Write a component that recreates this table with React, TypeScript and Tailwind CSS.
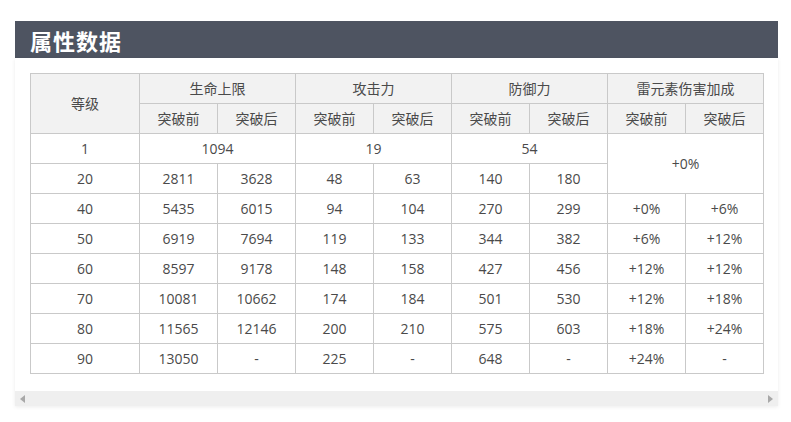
import React from "react";

type Cell = { v: string; span?: number; rows?: number };

const rows: Cell[][] = [
  [{ v: "1" }, { v: "1094", span: 2 }, { v: "19", span: 2 }, { v: "54", span: 2 }, { v: "+0%", span: 2, rows: 2 }],
  [{ v: "20" }, { v: "2811" }, { v: "3628" }, { v: "48" }, { v: "63" }, { v: "140" }, { v: "180" }],
  [{ v: "40" }, { v: "5435" }, { v: "6015" }, { v: "94" }, { v: "104" }, { v: "270" }, { v: "299" }, { v: "+0%" }, { v: "+6%" }],
  [{ v: "50" }, { v: "6919" }, { v: "7694" }, { v: "119" }, { v: "133" }, { v: "344" }, { v: "382" }, { v: "+6%" }, { v: "+12%" }],
  [{ v: "60" }, { v: "8597" }, { v: "9178" }, { v: "148" }, { v: "158" }, { v: "427" }, { v: "456" }, { v: "+12%" }, { v: "+12%" }],
  [{ v: "70" }, { v: "10081" }, { v: "10662" }, { v: "174" }, { v: "184" }, { v: "501" }, { v: "530" }, { v: "+12%" }, { v: "+18%" }],
  [{ v: "80" }, { v: "11565" }, { v: "12146" }, { v: "200" }, { v: "210" }, { v: "575" }, { v: "603" }, { v: "+18%" }, { v: "+24%" }],
  [{ v: "90" }, { v: "13050" }, { v: "-" }, { v: "225" }, { v: "-" }, { v: "648" }, { v: "-" }, { v: "+24%" }, { v: "-" }],
];

const groups = ["生命上限", "攻击力", "防御力", "雷元素伤害加成"];

const td = "border border-[#c9c9c9] h-[30px] p-0 text-center align-middle";

export default function App() {
  return (
    <div
      className="w-[791px] h-[422px] bg-white pt-[21px] pl-[15px]"
      style={{ fontFamily: '"Open Sans", "Noto Sans CJK SC", sans-serif' }}
    >
      <div className="w-[763px]">
        <div className="h-[37px] bg-[#4e5461] pl-[15px] flex items-center">
          <h2
            className="text-[22px] font-bold text-white leading-none tracking-[1px]"
            style={{ fontFamily: '"Noto Sans CJK SC", sans-serif' }}
          >
            属性数据
          </h2>
        </div>
        <div className="bg-white shadow-[0_1px_4px_rgba(0,0,0,0.08)] pt-[15px]">
          <div className="pl-[15px]">
            <table className="table-fixed border-collapse w-[733px] text-[14px] text-[#4a4a4a]">
              <colgroup>
                <col className="w-[109px]" />
                {Array.from({ length: 8 }).map((_, i) => (
                  <col key={i} className="w-[78px]" />
                ))}
              </colgroup>
              <thead className="bg-[#f2f2f2]">
                <tr>
                  <th rowSpan={2} className={`${td} font-normal`}>
                    等级
                  </th>
                  {groups.map((g) => (
                    <th key={g} colSpan={2} className={`${td} font-normal`}>
                      {g}
                    </th>
                  ))}
                </tr>
                <tr>
                  {groups.map((g) => (
                    <React.Fragment key={g}>
                      <th className={`${td} font-normal`}>突破前</th>
                      <th className={`${td} font-normal`}>突破后</th>
                    </React.Fragment>
                  ))}
                </tr>
              </thead>
              <tbody>
                {rows.map((r, i) => (
                  <tr key={i}>
                    {r.map((c, j) => (
                      <td key={j} colSpan={c.span} rowSpan={c.rows} className={td}>
                        {c.v}
                      </td>
                    ))}
                  </tr>
                ))}
              </tbody>
            </table>
          </div>
          {/* horizontal scrollbar */}
          <div className="mt-[17px] h-[15px] bg-[#efefef] flex items-center justify-between px-[5px]">
            <span className="w-0 h-0 border-y-[4px] border-y-transparent border-r-[5px] border-r-[#a8a8a8]" />
            <span className="w-0 h-0 border-y-[4px] border-y-transparent border-l-[5px] border-l-[#a8a8a8]" />
          </div>
        </div>
      </div>
    </div>
  );
}
